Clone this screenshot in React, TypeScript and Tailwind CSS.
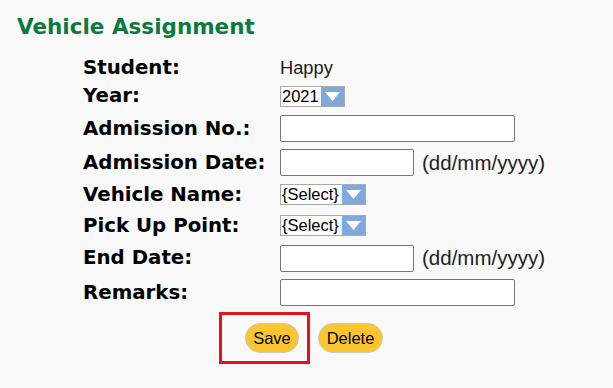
import React from "react";

const labelCls =
  "font-['DejaVu_Sans',Verdana,sans-serif] font-bold text-[19.8px] leading-[24px] text-black";

function FakeSelect({ value, width }: { value: string; width: string }) {
  return (
    <div className={`flex h-[21px] ${width} border border-[#a9a9a9] bg-white`}>
      <span className="flex-1 pl-px text-[16.5px] leading-[19px] text-black font-['Liberation_Sans',Arial,sans-serif]">
        {value}
      </span>
      <span className="flex w-[23px] items-center justify-center bg-[#7fa9dc]">
        <svg width="15" height="9" viewBox="0 0 15 9">
          <path d="M0 0 H15 L7.5 9 Z" fill="#fff" />
        </svg>
      </span>
    </div>
  );
}

function TextBox({ width }: { width: string }) {
  return (
    <div className={`h-[27px] ${width} rounded-[2px] border border-[#767676] bg-white`} />
  );
}

const dateHint = (
  <span className="ml-[8px] text-[20.5px] leading-[24px] text-[#222] font-['Liberation_Sans',Arial,sans-serif]">
    (dd/mm/yyyy)
  </span>
);

const rows: { label: string; h: string; field: React.ReactNode }[] = [
  {
    label: "Student:",
    h: "h-[27px]",
    field: (
      <span className="text-[18.3px] leading-[22px] text-[#1a1a1a] font-['Liberation_Sans',Arial,sans-serif]">
        Happy
      </span>
    ),
  },
  { label: "Year:", h: "h-[30px]", field: <FakeSelect value="2021" width="w-[65px]" /> },
  { label: "Admission No.:", h: "h-[35px]", field: <TextBox width="w-[235px]" /> },
  {
    label: "Admission Date:",
    h: "h-[33px]",
    field: (
      <>
        <TextBox width="w-[134px]" />
        {dateHint}
      </>
    ),
  },
  { label: "Vehicle Name:", h: "h-[31px]", field: <FakeSelect value="{Select}" width="w-[86px]" /> },
  { label: "Pick Up Point:", h: "h-[31px]", field: <FakeSelect value="{Select}" width="w-[86px]" /> },
  {
    label: "End Date:",
    h: "h-[34px]",
    field: (
      <>
        <TextBox width="w-[134px]" />
        {dateHint}
      </>
    ),
  },
  { label: "Remarks:", h: "h-[35px]", field: <TextBox width="w-[235px]" /> },
];

export default function App() {
  return (
    <div className="h-[388px] w-[613px] overflow-hidden bg-[#f9f9f9]">
      <h1 className="pl-[17px] pt-[13px] text-[21.5px] leading-[28px] font-bold text-[#0b7a3c] font-['DejaVu_Sans',Verdana,sans-serif]">
        Vehicle Assignment
      </h1>

      <div className="mt-[13px] pl-[83px]">
        {rows.map((r) => (
          <div key={r.label} className={`flex ${r.h} items-center`}>
            <div className={`w-[197px] ${labelCls}`}>{r.label}</div>
            <div className="flex items-center">{r.field}</div>
          </div>
        ))}
      </div>

      {/* buttons */}
      <div className="mt-[2px] flex items-center pl-[219px]">
        <div className="flex h-[52px] w-[91px] items-center border-[3px] border-[#e3121c] pl-[23px]">
          <button className="h-[30px] w-[54px] rounded-full border border-[#c9c9c9] bg-[#fbc52d] text-[16.5px] text-black font-['Liberation_Sans',Arial,sans-serif]">
            Save
          </button>
        </div>
        <button className="ml-[8px] h-[30px] w-[65px] rounded-full border border-[#c9c9c9] bg-[#fbc52d] text-[16.5px] text-black font-['Liberation_Sans',Arial,sans-serif]">
          Delete
        </button>
      </div>
    </div>
  );
}
